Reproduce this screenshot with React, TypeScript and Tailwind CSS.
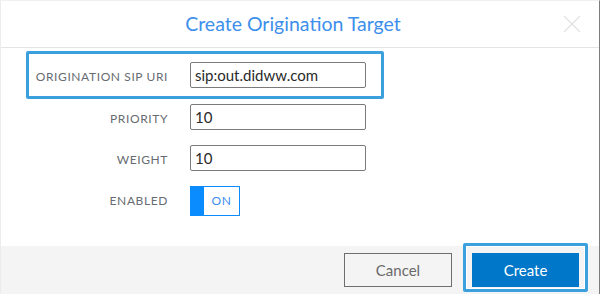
import { X } from "lucide-react";

const font = { fontFamily: "Lato, 'Open Sans', sans-serif" };

function Field({ label, value }: { label: string; value: string }) {
    return (
        <div className="flex items-center">
            <div className="w-[167px] text-right text-[12px] tracking-[0.6px] text-[#676c72] pt-1">
                {label}
            </div>
            <div className="ml-[22px] w-[176px] h-[26px] border border-[#7a7a7a] rounded-[2px] px-1 flex items-center text-[15px] text-[#2a2a2a]">
                {value}
            </div>
        </div>
    );
}

export default function App() {
    return (
        <div className="w-[601px] h-[294px] bg-white flex" style={font}>
            <div className="w-[600px] h-full flex flex-col border-l border-l-[#ececec] border-t border-t-[#f0f0f0] border-r border-r-[#7c7c7c]">
                {/* Header */}
                <div className="h-[47px] shrink-0 border-b border-[#e4e4e4] flex items-center">
                    <div className="flex-1 text-center text-[19.5px] text-[#3d8fec] pl-[28px]">
                        Create Origination Target
                    </div>
                    <X className="w-[30px] h-[30px] text-[#e0e0e0] mr-[12px]" strokeWidth={0.9} />
                </div>

                {/* Body */}
                <div className="flex-1 bg-white pt-[3px]">
                    {/* highlighted first row */}
                    <div className="ml-[25px] w-[358px] h-[48px] border-[3px] border-[#3ba0dd] rounded-[2px] flex items-center">
                        <div className="w-[139px] text-right text-[12px] tracking-[0.6px] text-[#676c72] pt-1">
                            ORIGINATION SIP URI
                        </div>
                        <div className="ml-[22px] w-[176px] h-[26px] border border-[#7a7a7a] rounded-[2px] px-1 flex items-center text-[15px] text-[#2a2a2a]">
                            sip:out.didww.com
                        </div>
                    </div>

                    <div className="mt-[5px]">
                        <Field label="PRIORITY" value="10" />
                    </div>
                    <div className="mt-[15px]">
                        <Field label="WEIGHT" value="10" />
                    </div>

                    {/* Enabled toggle */}
                    <div className="mt-[15px] flex items-center">
                        <div className="w-[167px] text-right text-[12px] tracking-[0.6px] text-[#676c72]">
                            ENABLED
                        </div>
                        <div className="ml-[22px] w-[50px] h-[30px] border border-[#0a8cff] flex">
                            <div className="w-[13px] h-full bg-[#0a8cff]" />
                            <div className="flex-1 flex items-center justify-center text-[12px] tracking-[0.5px] text-[#3d8ef0]">
                                ON
                            </div>
                        </div>
                    </div>
                </div>

                {/* Footer */}
                <div className="h-[48px] shrink-0 bg-[#f4f4f4] flex justify-end items-start pt-[7px] pr-[20px] gap-[20px]">
                    <button className="w-[108px] h-[34px] border border-[#6e6e6e] bg-[#f4f4f4] text-[15px] text-[#6a6a6a]">
                        Cancel
                    </button>
                    <div className="relative">
                        <span className="absolute -left-[9px] -right-[9px] -top-[10px] -bottom-[5px] border-[3px] border-[#3ba0dd] rounded-[2px] shadow-[inset_0_0_0_1px_#fff]" />
                        <button className="relative w-[107px] h-[34px] bg-[#0077c8] text-[15px] text-white">
                            Create
                        </button>
                    </div>
                </div>
            </div>
        </div>
    );
}
